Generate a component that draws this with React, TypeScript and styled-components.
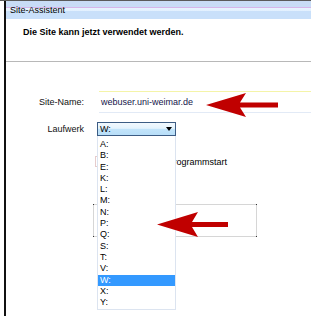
import React from 'react';
import styled, { createGlobalStyle } from 'styled-components';

const GlobalStyle = createGlobalStyle`
	html, body {
		margin: 0;
		padding: 0;
		background: #fff;
	}
	body {
		font-family: "Liberation Sans", Arial, sans-serif;
		font-size: 9px;
		color: #000;
	}
`;

const Screen = styled.div`
	position: relative;
	width: 311px;
	height: 316px;
	overflow: hidden;
	border-top: 1px solid #5a5a5a;
	box-sizing: border-box;
`;

const Window = styled.div`
	margin-left: 4px;
	height: 100%;
	border-left: 2px solid #111;
	display: flex;
	flex-direction: column;
`;

const TitleBar = styled.div`
	height: 18px;
	padding-left: 4px;
	display: flex;
	align-items: center;
	background: linear-gradient(
		to bottom,
		#c8dcf6 0,
		#c8dcf6 6px,
		#d6b6ea 6px,
		#d6b6ea 7px,
		#e6f4ff 7px,
		#e2f0fe 10px,
		#c9e0fa 10px,
		#c9e0fa 100%
	);
`;

const Header = styled.div`
	height: 43px;
	padding: 8px 0 0 17px;
	box-sizing: border-box;
	border-bottom: 1px solid #b8b8b8;
	font-weight: bold;
`;

const Form = styled.div`
	display: grid;
	grid-template-columns: 78px 1fr;
	column-gap: 13px;
	align-items: center;
	padding-top: 29px;
`;

const Label = styled.div`
	text-align: right;
	color: #111;
	margin-top: ${(p: { top?: number }) => p.top ?? 0}px;
`;

const NameField = styled.div`
	height: 22px;
	box-sizing: border-box;
	border-top: 1px solid #f4f4a8;
	border-bottom: 1px solid #e2eaf6;
	margin-left: 2px;
	padding-left: 2px;
	display: flex;
	align-items: center;
	color: #14144a;
`;

const SelectWrap = styled.div`
	position: relative;
	width: 79px;
	margin-top: 9px;
`;

const Select = styled.div`
	height: 14px;
	box-sizing: border-box;
	border: 1px solid #3c5c84;
	background: linear-gradient(to bottom, #f2f9fe 0, #e4f3fd 45%, #c2e4fa 50%, #b8def8 100%);
	display: flex;
	align-items: center;
	justify-content: space-between;
	padding: 0 3px 0 2px;
`;

const Caret = styled.span`
	width: 0;
	height: 0;
	border-left: 3px solid transparent;
	border-right: 3px solid transparent;
	border-top: 4px solid #000;
`;

const DropList = styled.div`
	position: absolute;
	top: 14px;
	left: 0;
	width: 79px;
	box-sizing: border-box;
	border: 1px solid #dce4f0;
	border-top: none;
	background: #fff;
	padding: 3px 0 1px;
	z-index: 2;
`;

const Item = styled.div<{ selected?: boolean }>`
	height: 11.3px;
	line-height: 11.3px;
	padding-left: 2px;
	background: ${(p) => (p.selected ? '#3399ff' : 'transparent')};
	color: ${(p) => (p.selected ? '#fff' : '#000')};
`;

const CheckRow = styled.div`
	grid-column: 2;
	display: flex;
	align-items: center;
	gap: 4px;
	margin-top: 20px;
	margin-left: -2px;
`;

const Box = styled.span`
	width: 11px;
	height: 11px;
	box-sizing: border-box;
	border: 1px solid #e6cccc;
`;

const GroupBox = styled.div`
	grid-column: 2;
	position: relative;
	width: 164px;
	height: 33px;
	box-sizing: border-box;
	margin: 37px 0 0 -4px;
	border: 1px solid #d6d6d6;
`;

const Corner = styled.span<{ v: 'top' | 'bottom'; h: 'left' | 'right' }>`
	position: absolute;
	${(p) => p.v}: -1px;
	${(p) => p.h}: -1px;
	width: 1px;
	height: 1px;
	background: #333;
`;

const Arrows = styled.svg`
	position: absolute;
	left: 0;
	top: 0;
	z-index: 3;
	pointer-events: none;
`;

const drives = ['A:', 'B:', 'E:', 'K:', 'L:', 'M:', 'N:', 'P:', 'Q:', 'S:', 'T:', 'V:', 'W:', 'X:', 'Y:'];

export default function App() {
	return (
		<>
			<GlobalStyle />
			<Screen>
				<Window>
					<TitleBar>Site-Assistent</TitleBar>
					<Header>Die Site kann jetzt verwendet werden.</Header>
					<Form>
						<Label>Site-Name:</Label>
						<NameField>webuser.uni-weimar.de</NameField>
						<Label top={9}>Laufwerk</Label>
						<SelectWrap>
							<Select>
								<span>W:</span>
								<Caret />
							</Select>
							<DropList>
								{drives.map((d) => (
									<Item key={d} selected={d === 'W:'}>
										{d}
									</Item>
								))}
							</DropList>
						</SelectWrap>
						<CheckRow>
							<Box />
							<span>Verbinden bei Programmstart</span>
						</CheckRow>
						<GroupBox>
							<Corner v="top" h="left" />
							<Corner v="top" h="right" />
							<Corner v="bottom" h="left" />
							<Corner v="bottom" h="right" />
						</GroupBox>
					</Form>
				</Window>
				<Arrows width="311" height="316" viewBox="0 0 311 316">
					<path d="M206 104 L246 92 L240 101.5 L278 101.5 L278 106.5 L240 106.5 L246 116 Z" fill="#c00000" />
					<path d="M157 223.5 L198 211 L192 221 L228 221 L228 226 L192 226 L198 236 Z" fill="#c00000" />
				</Arrows>
			</Screen>
		</>
	);
}
